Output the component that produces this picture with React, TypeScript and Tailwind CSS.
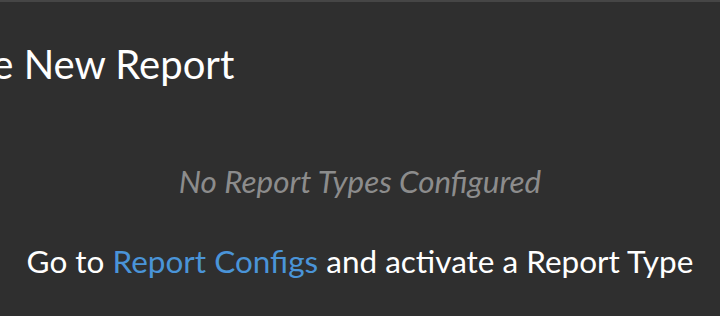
export default function App() {
  return (
    <div className="h-[316px] w-[720px] overflow-hidden bg-[#2f2f2f] border-t-2 border-[#464646] font-['Lato','Liberation_Sans',sans-serif]">
      {/* Header */}
      <h1 className="ml-[-103px] mt-[38px] text-[40px] leading-[48px] font-normal text-white whitespace-nowrap">
        Create New Report
      </h1>

      {/* Empty state */}
      <div className="mt-[75px] flex flex-col items-center">
        <p className="text-[31.4px] italic text-[#8c8c8c] leading-[36px] whitespace-nowrap">No Report Types Configured</p>
        <p className="mt-[42px] text-[31.5px] text-white leading-[40px] whitespace-nowrap">
          Go to <a className="text-[#4a94d8]">Report Configs</a> and activate a Report Type
        </p>
      </div>
    </div>
  );
}
